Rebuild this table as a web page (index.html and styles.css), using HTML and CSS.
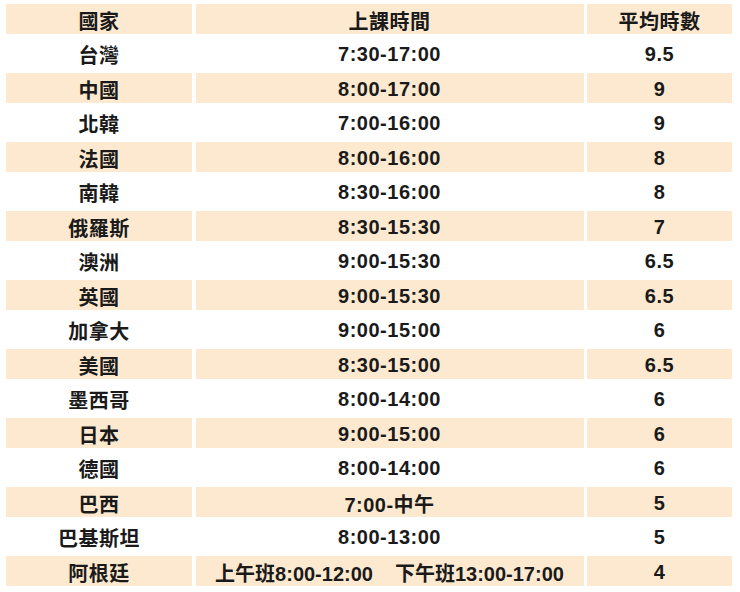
FILE: index.html
```html
<!DOCTYPE html>
<html lang="zh-Hant">
<head>
<meta charset="utf-8">
<link rel="stylesheet" href="styles.css">
</head>
<body>
<div class="table">
  <div class="c h">國家</div><div class="c h">上課時間</div><div class="c h">平均時數</div>
  <div class="c">台灣</div><div class="c">7:30-17:00</div><div class="c">9.5</div>
  <div class="c h">中國</div><div class="c h">8:00-17:00</div><div class="c h">9</div>
  <div class="c">北韓</div><div class="c">7:00-16:00</div><div class="c">9</div>
  <div class="c h">法國</div><div class="c h">8:00-16:00</div><div class="c h">8</div>
  <div class="c">南韓</div><div class="c">8:30-16:00</div><div class="c">8</div>
  <div class="c h">俄羅斯</div><div class="c h">8:30-15:30</div><div class="c h">7</div>
  <div class="c">澳洲</div><div class="c">9:00-15:30</div><div class="c">6.5</div>
  <div class="c h">英國</div><div class="c h">9:00-15:30</div><div class="c h">6.5</div>
  <div class="c">加拿大</div><div class="c">9:00-15:00</div><div class="c">6</div>
  <div class="c h">美國</div><div class="c h">8:30-15:00</div><div class="c h">6.5</div>
  <div class="c">墨西哥</div><div class="c">8:00-14:00</div><div class="c">6</div>
  <div class="c h">日本</div><div class="c h">9:00-15:00</div><div class="c h">6</div>
  <div class="c">德國</div><div class="c">8:00-14:00</div><div class="c">6</div>
  <div class="c h">巴西</div><div class="c h">7:00-中午</div><div class="c h">5</div>
  <div class="c">巴基斯坦</div><div class="c">8:00-13:00</div><div class="c">5</div>
  <div class="c h">阿根廷</div><div class="c h tight"><span>上午班8:00-12:00</span><span class="pm">下午班13:00-17:00</span></div><div class="c h">4</div>
</div>
</body>
</html>
```
FILE: styles.css
```css
html, body {
  margin: 0;
  padding: 0;
  background: #ffffff;
}
body {
  width: 740px;
  height: 592px;
  overflow: hidden;
}
.table {
  margin: 4px 0 0 6px;
  display: grid;
  grid-template-columns: 186px 388px 145px;
  grid-auto-rows: 30px;
  column-gap: 3.5px;
  row-gap: 4.5px;
  width: 726px;
}
.c {
  display: flex;
  align-items: center;
  justify-content: center;
  padding-top: 2px;
  box-sizing: border-box;
  font-family: "Liberation Sans", "Noto Sans CJK TC", sans-serif;
  font-weight: bold;
  font-size: 20px;
  letter-spacing: 0.5px;
  color: #1a1a1a;
  white-space: nowrap;
}
.h {
  background: #fde9cf;
}
.tight {
  letter-spacing: 0;
}
.pm {
  margin-left: 22px;
}
```
